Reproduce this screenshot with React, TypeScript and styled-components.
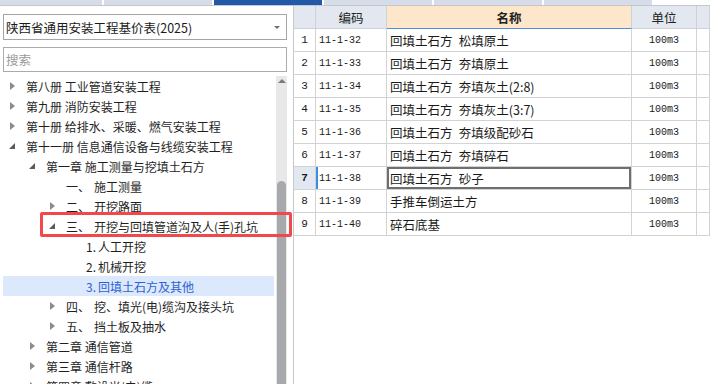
import styled, { createGlobalStyle } from "styled-components";

const GlobalStyle = createGlobalStyle`
  html, body { margin: 0; padding: 0; background: #fff; }
  body {
    font-family: "Noto Sans CJK SC", "Microsoft YaHei", sans-serif;
    font-size: 12px;
    color: #1f1f1f;
  }
  * { box-sizing: border-box; }
`;

const Page = styled.div`
  position: relative;
  width: 710px;
  height: 384px;
  overflow: hidden;
  display: flex;
  flex-direction: column;
`;

const TabStrip = styled.div`
  height: 6px;
  flex-shrink: 0;
  display: flex;
  gap: 2px;
  border-bottom: 1px solid #c4c8ce;
`;

const Tab = styled.div<{ $w: number; $active?: boolean }>`
  width: ${(p) => p.$w}px;
  background: ${(p) => (p.$active ? "#2158a8" : "#d6dde8")};
`;

const Body = styled.div`
  flex: 1;
  display: flex;
  min-height: 0;
`;

const LeftPanel = styled.div`
  width: 294px;
  flex-shrink: 0;
  border-right: 1px solid #c9c9c9;
  display: flex;
  flex-direction: column;
  padding: 8px 6px 0 3px;
`;

const Dropdown = styled.div`
  height: 26px;
  border: 1px solid #a5a5a5;
  display: flex;
  align-items: center;
  justify-content: space-between;
  padding: 0 6px 0 2px;
  font-size: 12.5px;
  color: #1a1a1a;
`;

const Caret = styled.span`
  width: 0;
  height: 0;
  border-left: 3px solid transparent;
  border-right: 3px solid transparent;
  border-top: 3px solid #707070;
`;

const Search = styled.div`
  margin-top: 7px;
  height: 25px;
  border: 1px solid #ababab;
  display: flex;
  align-items: center;
  padding-left: 2px;
  font-size: 12.5px;
  color: #9a9a9a;
`;

const TreeArea = styled.div`
  margin-top: 4px;
  flex: 1;
  display: flex;
  min-height: 0;
`;

const TreeList = styled.div`
  flex: 1;
  padding-right: 2px;
`;

const TreeRow = styled.div<{ $level: number; $selected?: boolean }>`
  height: 20px;
  display: flex;
  align-items: center;
  padding-left: ${(p) => 1 + p.$level * 20}px;
  background: ${(p) => (p.$selected ? "#dce8fb" : "transparent")};
  color: ${(p) => (p.$selected ? "#2d62d4" : "#1f1f1f")};
  white-space: nowrap;
`;

const ArrowBox = styled.span`
  width: 16px;
  margin-right: 6px;
  display: flex;
  align-items: center;
  justify-content: center;
  flex-shrink: 0;
`;

const Collapsed = styled.span`
  width: 0;
  height: 0;
  border-top: 4px solid transparent;
  border-bottom: 4px solid transparent;
  border-left: 5px solid #8c8c8c;
`;

const Expanded = styled.span`
  width: 0;
  height: 0;
  border-left: 6px solid transparent;
  border-bottom: 6px solid #5a5a5a;
`;

const Prefix = styled.span<{ $w: number }>`
  display: inline-block;
  width: ${(p) => p.$w}px;
`;

const ScrollTrack = styled.div`
  width: 11px;
  flex-shrink: 0;
  background: #e8e8e8;
  display: flex;
  flex-direction: column;
  align-items: center;
`;

const UpArrow = styled.span`
  margin-top: 3px;
  width: 0;
  height: 0;
  border-left: 4px solid transparent;
  border-right: 4px solid transparent;
  border-bottom: 4px solid #7a7a7a;
`;

const Thumb = styled.div`
  margin-top: 98px;
  width: 9px;
  flex: 1;
  background: #a7a9ac;
  border-radius: 5px 5px 0 0;
`;

const Grid = styled.div`
  flex: 1;
  display: flex;
  flex-direction: column;
  font-family: "Liberation Mono", "Noto Sans CJK SC", monospace;
`;

const Row = styled.div`
  display: grid;
  grid-template-columns: 22px 71px 245px 65px 1fr;
  height: 23px;
`;

const HeadCell = styled.div<{ $accent?: boolean }>`
  display: flex;
  align-items: center;
  justify-content: center;
  font-family: "Noto Sans CJK SC", sans-serif;
  font-size: 12.5px;
  font-weight: ${(p) => (p.$accent ? 700 : 400)};
  background: ${(p) => (p.$accent ? "#fde6c9" : "#e3e8f0")};
  border-right: 1px solid #cdd2d9;
  border-bottom: 1px solid ${(p) => (p.$accent ? "#4d8fdc" : "#cdd2d9")};
  color: #222;
`;

const Cell = styled.div<{ $kind: "num" | "code" | "name" | "unit" | "pad"; $current?: boolean }>`
  display: flex;
  align-items: center;
  border-right: 1px solid #d3d3d3;
  border-bottom: 1px solid #d3d3d3;
  color: #1a1a1a;
  white-space: pre;
  overflow: hidden;
  font-size: ${(p) => (p.$kind === "name" ? 12.5 : 10)}px;
  font-family: ${(p) =>
    p.$kind === "name" ? `"Noto Sans CJK SC", sans-serif` : `"Liberation Mono", monospace`};
  justify-content: ${(p) => (p.$kind === "num" || p.$kind === "unit" ? "center" : "flex-start")};
  padding-left: ${(p) => (p.$kind === "code" || p.$kind === "name" ? 3 : 0)}px;
  ${(p) =>
    p.$kind === "num" &&
    `font-size: 11px; background: ${p.$current ? "#e2e8f2" : "#fff"}; font-weight: ${p.$current ? 700 : 400};`}
  ${(p) => p.$kind === "code" && p.$current && `box-shadow: inset 2px 0 0 #3d8be6;`}
  ${(p) => p.$kind === "name" && p.$current && `box-shadow: inset 0 0 0 2px #6f6f6f;`}
`;

const Annotation = styled.div`
  position: absolute;
  left: 40px;
  top: 212px;
  width: 252px;
  height: 25px;
  border: 3px solid #f2484b;
  border-radius: 2px;
  pointer-events: none;
`;

type Node = { level: number; label: string; prefix?: string; pw?: number; state?: "open" | "closed"; selected?: boolean };

const tree: Node[] = [
  { level: 0, label: "第八册 工业管道安装工程", state: "closed" },
  { level: 0, label: "第九册 消防安装工程", state: "closed" },
  { level: 0, label: "第十册 给排水、采暖、燃气安装工程", state: "closed" },
  { level: 0, label: "第十一册 信息通信设备与线缆安装工程", state: "open" },
  { level: 1, label: "第一章 施工测量与挖填土石方", state: "open" },
  { level: 2, prefix: "一、", pw: 28, label: "施工测量" },
  { level: 2, prefix: "二、", pw: 28, label: "开挖路面", state: "closed" },
  { level: 2, prefix: "三、", pw: 28, label: "开挖与回填管道沟及人(手)孔坑", state: "open" },
  { level: 3, prefix: "1.", pw: 12, label: "人工开挖" },
  { level: 3, prefix: "2.", pw: 12, label: "机械开挖" },
  { level: 3, prefix: "3.", pw: 12, label: "回填土石方及其他", selected: true },
  { level: 2, prefix: "四、", pw: 28, label: "挖、填光(电)缆沟及接头坑", state: "closed" },
  { level: 2, prefix: "五、", pw: 28, label: "挡土板及抽水", state: "closed" },
  { level: 1, label: "第二章 通信管道", state: "closed" },
  { level: 1, label: "第三章 通信杆路", state: "closed" },
  { level: 1, label: "第四章 敷设光(电)缆", state: "closed" },
];

const rows = [
  ["11-1-32", "回填土石方\u2002松填原土"],
  ["11-1-33", "回填土石方\u2002夯填原土"],
  ["11-1-34", "回填土石方\u2002夯填灰土(2:8)"],
  ["11-1-35", "回填土石方\u2002夯填灰土(3:7)"],
  ["11-1-36", "回填土石方\u2002夯填级配砂石"],
  ["11-1-37", "回填土石方\u2002夯填碎石"],
  ["11-1-38", "回填土石方\u2002砂子"],
  ["11-1-39", "手推车倒运土方"],
  ["11-1-40", "碎石底基"],
];

export default function App() {
  return (
    <Page>
      <GlobalStyle />
      <TabStrip>
        <Tab $w={102} />
        <Tab $w={108} />
        <Tab $w={108} $active />
        <Tab $w={108} />
        <Tab $w={108} />
        <Tab $w={108} />
      </TabStrip>
      <Body>
        <LeftPanel>
          <Dropdown>
            <span>陕西省通用安装工程基价表(2025)</span>
            <Caret />
          </Dropdown>
          <Search>搜索</Search>
          <TreeArea>
            <TreeList>
              {tree.map((n, i) => (
                <TreeRow key={i} $level={n.level} $selected={n.selected}>
                  <ArrowBox>
                    {n.state === "closed" && <Collapsed />}
                    {n.state === "open" && <Expanded />}
                  </ArrowBox>
                  {n.prefix && <Prefix $w={n.pw ?? 0}>{n.prefix}</Prefix>}
                  <span>{n.label}</span>
                </TreeRow>
              ))}
            </TreeList>
            <ScrollTrack>
              <UpArrow />
              <Thumb />
            </ScrollTrack>
          </TreeArea>
        </LeftPanel>
        <Grid>
          <Row>
            <HeadCell />
            <HeadCell>编码</HeadCell>
            <HeadCell $accent>名称</HeadCell>
            <HeadCell>单位</HeadCell>
            <HeadCell />
          </Row>
          {rows.map(([code, name], i) => (
            <Row key={code}>
              <Cell $kind="num" $current={i === 6}>{i + 1}</Cell>
              <Cell $kind="code" $current={i === 6}>{code}</Cell>
              <Cell $kind="name" $current={i === 6}>{name}</Cell>
              <Cell $kind="unit">100m3</Cell>
              <Cell $kind="pad" />
            </Row>
          ))}
        </Grid>
      </Body>
      <Annotation />
    </Page>
  );
}
